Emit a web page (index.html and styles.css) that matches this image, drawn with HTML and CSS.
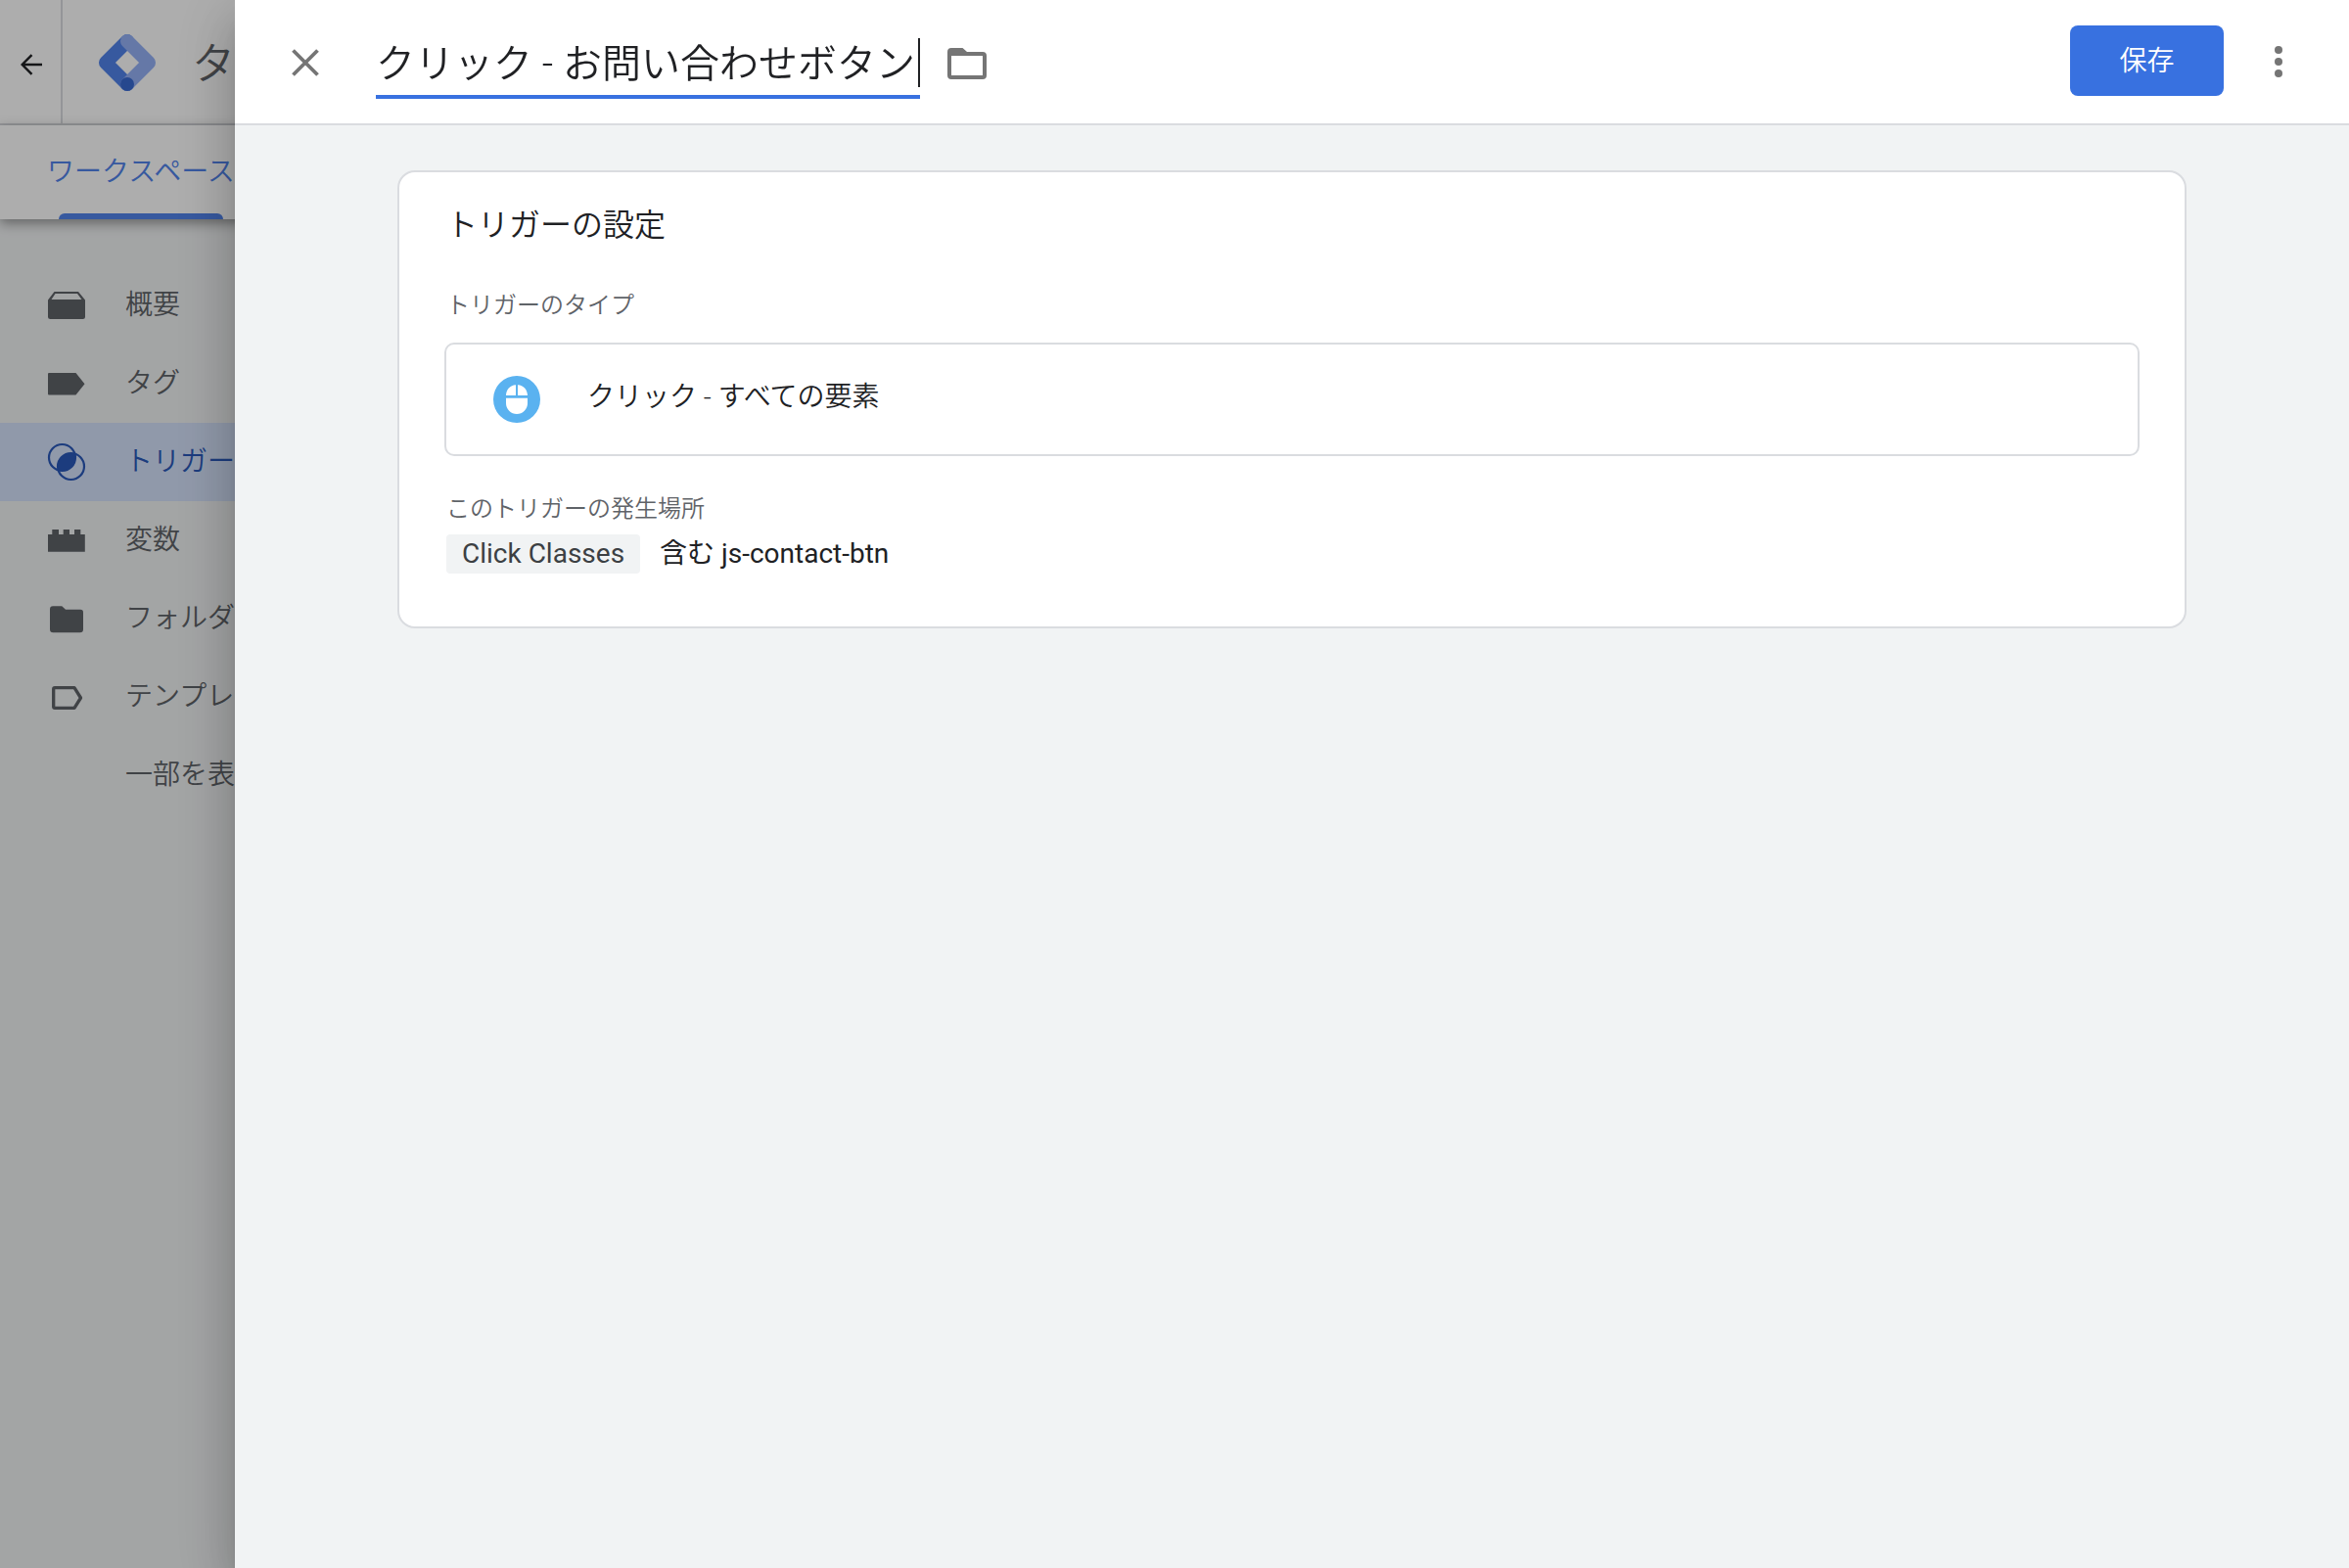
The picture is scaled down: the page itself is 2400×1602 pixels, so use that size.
FILE: index.html
```html
<!DOCTYPE html>
<html lang="ja">
<head>
<meta charset="utf-8">
<title>タグ マネージャー</title>
<link rel="stylesheet" href="styles.css">
</head>
<body>
<div class="app">
  <header class="topbar">
    <button class="back" type="button" aria-label="戻る">
      <svg width="24" height="24" viewBox="0 0 24 24" fill="none" stroke="currentColor" stroke-width="2.4"><path d="M24 12H4M13.500 2.200 3.700 12l9.800 9.800"/></svg>
    </button>
    <div class="brand">
      <svg width="60" height="60" viewBox="0 0 60 60" fill="none" stroke-width="14" stroke-linecap="round" stroke-linejoin="round">
        <path d="M30 8 8 30l22 22" stroke="#5183eb"/>
        <path d="M30 8l22 22-22 22" stroke="#95b2f7"/>
        <circle cx="30" cy="52" r="7" fill="#396ad2"/>
      </svg>
      <span class="brand-name">タグ マネージャー</span>
    </div>
  </header>
  <nav class="tabs">
    <a class="tab" href="#workspace">ワークスペース</a>
  </nav>
  <nav class="sidebar">
    <a class="item" href="#overview">
      <svg class="icon" viewBox="0 0 40 40"><path fill="currentColor" fill-rule="evenodd" d="M7.500 6h24.500L39 14.500V31.500a2.500 2.500 0 0 1-2.500 2.500h-33A2.500 2.500 0 0 1 1 31.500V14.500zM8.500 8 4.500 14h31L31 8z"/></svg>概要</a>
    <a class="item" href="#tags">
      <svg class="icon" viewBox="0 0 40 40"><path fill="currentColor" d="M2 9h27.500l9 11.200-9 11.300H2a1 1 0 0 1-1-1V10a1 1 0 0 1 1-1z"/></svg>タグ</a>
    <a class="item selected" href="#triggers">
      <svg class="icon" viewBox="0 0 40 40"><g fill="none" stroke="currentColor" stroke-width="2.200"><circle cx="15.500" cy="15.500" r="13.500"/><circle cx="24.500" cy="24.500" r="13.500"/></g><path fill="currentColor" d="M28.400 11.600a13.500 13.500 0 0 1-16.800 16.800 13.500 13.500 0 0 1 16.800-16.800z"/></svg>トリガー</a>
    <a class="item" href="#variables">
      <svg class="icon" viewBox="0 0 40 40"><path fill="currentColor" d="M1 14h4.300V9H12v5h4.700V9H23v5h5V9h6.300v5h4.500v17.700H1z"/></svg>変数</a>
    <a class="item" href="#folders">
      <svg class="icon" viewBox="0 0 40 40"><path fill="currentColor" d="M6.500 7.300h8.700L19 10.800h15A3 3 0 0 1 37 14v17a3.300 3.300 0 0 1-3.300 3.300H6.300A3.300 3.300 0 0 1 3 31V10.600a3.300 3.300 0 0 1 3.500-3.300z"/></svg>フォルダ</a>
    <a class="item" href="#templates">
      <svg class="icon" viewBox="0 0 40 40"><path fill="none" stroke="currentColor" stroke-width="3.300" stroke-linejoin="round" d="M8 10.700h20L34.500 21 28 31.300H8a1.300 1.300 0 0 1-1.300-1.300V12A1.300 1.300 0 0 1 8 10.700z"/></svg>テンプレート</a>
    <a class="item" href="#less"><span class="icon"></span>一部を表示</a>
  </nav>
</div>
<div class="scrim"></div>
<main class="panel">
  <header class="panel-bar">
    <button class="icon-button" type="button" aria-label="閉じる">
      <svg width="32" height="32" viewBox="0 0 32 32" fill="none" stroke="currentColor" stroke-width="3.800"><path d="m3.500 4.500 25 25M28.500 4.500l-25 25"/></svg>
    </button>
    <div class="name">
      <input class="name-input" type="text" aria-label="トリガー名" value="クリック - お問い合わせボタン">
      <span class="caret"></span>
    </div>
    <button class="icon-button" type="button" aria-label="フォルダ">
      <svg width="40" height="36" viewBox="0 -2 40 36"><path fill="currentColor" fill-rule="evenodd" d="M4 2h11.500l4.500 4h16a4 4 0 0 1 4 4v20a4 4 0 0 1-4 4H4a4 4 0 0 1-4-4V6a4 4 0 0 1 4-4zM4 10v20h32V10z"/></svg>
    </button>
    <button class="save" type="button">保存</button>
    <button class="icon-button" type="button" aria-label="その他">
      <svg width="8" height="32" viewBox="0 0 8 32" fill="currentColor"><circle cx="4" cy="4" r="4"/><circle cx="4" cy="16" r="4"/><circle cx="4" cy="28" r="4"/></svg>
    </button>
  </header>
  <div class="content">
    <section class="card">
      <h1 class="card-title">トリガーの設定</h1>
      <h2 class="label">トリガーのタイプ</h2>
      <button class="type" type="button">
        <svg width="48" height="48" viewBox="0 0 48 48"><circle cx="24" cy="24" r="24" fill="#5ab2f0"/><path fill="#fff" d="M23 9.200V20H13c0-6 4.300-10.400 10-10.800zM25 9.200V20h10c0-6-4.300-10.400-10-10.800zM13 22.800h22V28a11 11 0 0 1-22 0z"/></svg>
        <span class="type-name">クリック - すべての要素</span>
      </button>
      <h2 class="label">このトリガーの発生場所</h2>
      <p class="condition"><span class="chip">Click Classes</span><span>含む js-contact-btn</span></p>
    </section>
  </div>
</main>
</body>
</html>
```
FILE: styles.css
```css
* {
  box-sizing: border-box;
}

body {
  margin: 0;
  min-height: 100vh;
  background: #f1f3f4;
  color: #202124;
  font-family: Roboto, "Noto Sans CJK JP", sans-serif;
  font-size: 28px;
  font-weight: 350;
  line-height: 40px;
}

button,
input {
  margin: 0;
  padding: 0;
  border: 0;
  background: none;
  color: inherit;
  font: inherit;
}

a {
  color: inherit;
  text-decoration: none;
}

svg {
  display: block;
  flex: none;
}

/* Page behind the panel */
.app {
  overflow: hidden;
  white-space: nowrap;
}

.topbar {
  display: flex;
  height: 128px;
  border-bottom: 2px solid #dadce0;
  background: #fff;
}

.back {
  display: flex;
  align-items: center;
  justify-content: center;
  width: 64px;
  padding-top: 6px;
  border-right: 2px solid #dadce0;
}

.brand {
  display: flex;
  align-items: center;
  gap: 36px;
  padding: 2px 36px 0;
  color: #5f6368;
  font-size: 44px;
}

.brand-name {
  padding-top: 4px;
}

.tabs {
  position: relative;
  display: flex;
  height: 96px;
  padding-left: 48px;
  background: #fff;
  box-shadow: 0 4px 12px rgba(0, 0, 0, 0.4);
  color: #5183eb;
}

.tab {
  position: relative;
  padding-top: 28px;
}

.tab::after {
  content: "";
  position: absolute;
  right: 12px;
  bottom: 0;
  left: 12px;
  height: 6px;
  border-radius: 6px 6px 0 0;
  background: #5183eb;
}

.sidebar {
  padding-top: 48px;
  color: #5f6368;
}

.item {
  display: flex;
  align-items: center;
  gap: 40px;
  height: 80px;
  padding-left: 48px;
}

.item.selected {
  background: #d5e2fb;
  color: #2a59ba;
}

.icon {
  width: 40px;
  height: 40px;
}

.scrim {
  position: fixed;
  inset: 0;
  background: rgba(0, 0, 0, 0.32);
}

/* Trigger editor */
.panel {
  position: fixed;
  inset: 0 0 0 10%;
  overflow: auto;
  background: #f1f3f4;
  box-shadow: 0 16px 20px -10px rgba(0, 0, 0, 0.2), 0 32px 48px 4px rgba(0, 0, 0, 0.14), 0 12px 60px 10px rgba(0, 0, 0, 0.12);
}

.panel-bar {
  display: flex;
  align-items: center;
  height: 128px;
  padding: 0 48px;
  border-bottom: 2px solid #dadce0;
  background: #fff;
}

.icon-button {
  display: flex;
  align-items: center;
  justify-content: center;
  width: 48px;
  height: 48px;
  color: #757575;
}

.name {
  position: relative;
  width: 556px;
  margin: 0 24px 0 48px;
}

.name-input {
  display: block;
  width: 100%;
  height: 76px;
  padding-top: 2px;
  border-bottom: 4px solid #3871e0;
  outline: 0;
  font-size: 40px;
}

.caret {
  position: absolute;
  top: 14px;
  right: 0;
  width: 2px;
  height: 50px;
  background: #202124;
}

.save {
  width: 157px;
  height: 72px;
  margin: 0 32px 2px auto;
  padding-top: 2px;
  border-radius: 8px;
  background: #3871e0;
  color: #fff;
}

.content {
  padding: 46px 166px;
}

.card {
  padding: 34px 46px 54px;
  border: 2px solid #dadce0;
  border-radius: 18px;
  background: #fff;
}

.card-title,
.label {
  margin: 0 0 0 2px;
  font-weight: inherit;
}

.card-title {
  margin-bottom: 42px;
  font-size: 32px;
}

.label {
  color: #5f6368;
  font-size: 24px;
}

.type {
  display: flex;
  align-items: center;
  gap: 48px;
  width: 100%;
  height: 116px;
  margin: 18px 0 34px;
  padding: 0 48px;
  border: 2px solid #dadce0;
  border-radius: 10px;
  text-align: left;
}

.type-name {
  padding-bottom: 4px;
}

.condition {
  display: flex;
  align-items: center;
  gap: 20px;
  margin: 6px 0 0 2px;
  font-weight: 400;
}

.chip {
  padding: 0 16px;
  border-radius: 4px;
  background: #f1f3f4;
  color: #3c4043;
}
```
